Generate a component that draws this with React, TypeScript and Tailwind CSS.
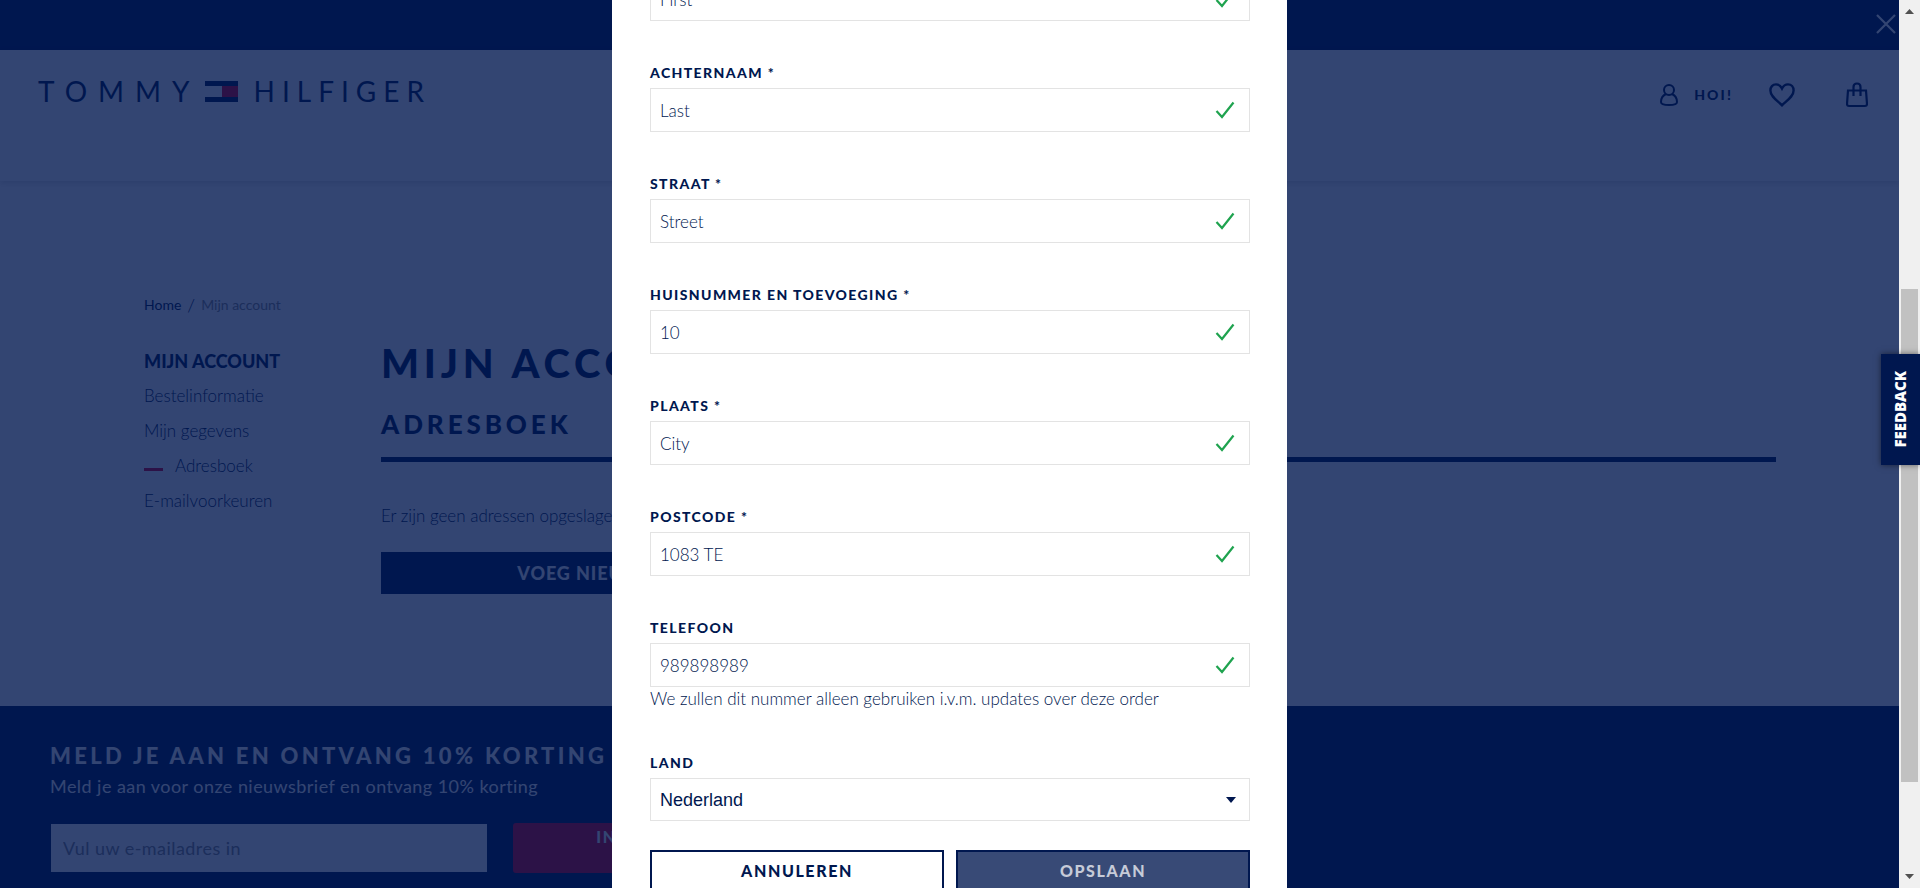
import React from "react";

type Field = { id: string; label: string; value: string; help?: string };

const fields: Field[] = [
  { id: "firstName", label: "Voornaam *", value: "First" },
  { id: "lastName", label: "Achternaam *", value: "Last" },
  { id: "street", label: "Straat *", value: "Street" },
  { id: "houseNumber", label: "Huisnummer en toevoeging *", value: "10" },
  { id: "city", label: "Plaats *", value: "City" },
  { id: "zip", label: "Postcode *", value: "1083 TE" },
  {
    id: "phone",
    label: "Telefoon",
    value: "989898989",
    help: "We zullen dit nummer alleen gebruiken i.v.m. updates over deze order",
  },
];

const menu = ["Bestelinformatie", "Mijn gegevens", "Adresboek", "E-mailvoorkeuren"];

function Logo() {
  return (
    <a href="#" aria-label="Tommy Hilfiger" className="flex items-center text-[28px] leading-8">
      <span className="tracking-[11px]">TOMMY</span>
      <svg width="33" height="21" viewBox="0 0 33 21" className="mr-4 ml-1">
        <rect width="33" height="21" fill="#fff" />
        <rect x="17" y="5" width="16" height="11" fill="#dc0028" />
        <rect width="33" height="5" fill="#00174f" />
        <rect y="16" width="33" height="5" fill="#00174f" />
      </svg>
      <span className="tracking-[7px]">HILFIGER</span>
    </a>
  );
}

function Header() {
  return (
    <header>
      <div className="flex h-[50px] items-center justify-end bg-[#00174f] pr-[3px] pb-0.5">
        <button aria-label="Sluiten" className="text-white">
          <svg width="20" height="20" viewBox="0 0 20 20" fill="none" stroke="currentColor" strokeWidth="2.200">
            <path d="M1 1l18 18M19 1L1 19" />
          </svg>
        </button>
      </div>
      <div className="flex h-[131px] items-start justify-between pt-[25px] pr-[31px] pl-[38px] shadow-[0_2px_6px_rgba(0,0,0,0.15)]">
        <Logo />
        <nav className="flex h-10 items-center">
          <a href="#" className="mr-9 flex items-center gap-4 text-sm font-black tracking-[0.15em]">
            <svg width="18" height="22" viewBox="0 0 18 22" fill="none" stroke="currentColor" strokeWidth="2">
              <circle cx="9" cy="6" r="5" />
              <path d="M6 10C2.800 11.500 1 14.500 1 18c0 2 3.500 3 8 3s8-1 8-3c0-3.500-1.800-6.500-5-8" />
            </svg>
            HOI!
          </a>
          <a href="#" aria-label="Verlanglijst" className="mr-[51px]">
            <svg width="26" height="24" viewBox="0 0 26 24" fill="none" stroke="currentColor" strokeWidth="2.400">
              <path d="M13 5.500C11.500 2.500 9.500 1.400 7 1.400 3.600 1.400 1.400 4 1.400 7.500 1.400 13.500 8 17.500 13 22.300c5-4.800 11.600-8.800 11.600-14.800 0-3.500-2.200-6.100-5.600-6.100-2.500 0-4.500 1.100-6 4.100z" />
            </svg>
          </a>
          <a href="#" aria-label="Winkeltas">
            <svg width="22" height="26" viewBox="0 0 22 26" fill="none" stroke="currentColor" strokeWidth="2.200">
              <path d="M2 8.500h18l1 13.500q0 2-2 2H3q-2 0-2-2z" />
              <path d="M7.500 14V5q0-3.500 3.500-3.500T14.500 5v9" />
            </svg>
          </a>
        </nav>
      </div>
    </header>
  );
}

function Account() {
  return (
    <main className="flex-1 pt-28 pr-[123px] pl-36">
      <nav aria-label="Kruimelpad" className="flex items-center gap-1.5 text-sm leading-6 font-light">
        <a href="#" className="font-normal">
          Home
        </a>
        <span className="text-lg leading-6">/</span>
        <span className="font-normal text-[#8b8b8b]">Mijn account</span>
      </nav>
      <div className="mt-[23px] flex">
        <aside className="w-[237px] shrink-0 pt-1">
          <h2 className="text-lg leading-[34px] font-black">MIJN ACCOUNT</h2>
          <ul className="text-[17px] leading-[35px] font-light">
            {menu.map((item) => (
              <li key={item} className="flex items-center">
                {item === "Adresboek" && <span className="mt-2 mr-3 h-[3px] w-[19px] bg-[#dc0028]" />}
                <a href="#">{item}</a>
              </li>
            ))}
          </ul>
        </aside>
        <section className="min-w-0 flex-1">
          <h1 className="text-[40px] leading-[46px] font-black tracking-[0.12em] whitespace-nowrap">MIJN ACCOUNT</h1>
          <h2 className="mt-[21px] border-b-5 border-[#00174f] pb-4 text-[26px] leading-[34px] font-black tracking-[0.15em]">
            ADRESBOEK
          </h2>
          <p className="mt-10 text-[17px] leading-7 font-light">Er zijn geen adressen opgeslagen</p>
          <button className="mt-[22px] h-[42px] w-[508px] bg-[#00174f] text-lg font-black tracking-wider text-white">
            VOEG NIEUW ADRES TOE
          </button>
        </section>
      </div>
    </main>
  );
}

function Footer() {
  return (
    <footer className="h-[182px] shrink-0 bg-[#00174f] px-[50px] pt-[35px] text-white">
      <h2 className="text-[22px] leading-[30px] font-black tracking-[0.15em]">MELD JE AAN EN ONTVANG 10% KORTING</h2>
      <p className="text-lg leading-[30px] tracking-wide">Meld je aan voor onze nieuwsbrief en ontvang 10% korting</p>
      <form className="mt-[22px] flex items-center gap-[26px]">
        <input
          type="email"
          aria-label="E-mailadres"
          placeholder="Vul uw e-mailadres in"
          className="ml-px h-12 w-[436px] bg-white px-3 text-lg tracking-wide placeholder:text-[#8b8b8b]"
        />
        <button
          type="button"
          className="flex h-[50px] w-72 justify-center rounded-[3px] bg-[#dc0028] pt-0.5 text-base font-black tracking-widest text-white"
        >
          INSCHRIJVEN
        </button>
      </form>
    </footer>
  );
}

const labelClass = "block text-sm leading-6 font-black tracking-widest uppercase";

function AddressDialog() {
  return (
    <div className="absolute inset-0 flex items-start justify-center bg-[#00174f]/80">
      <form role="dialog" aria-label="Adres" className="-mt-[50px] w-[675px] bg-white pr-[37px] pb-10 pl-[38px]">
        {fields.map((f) => (
          <div key={f.id} className="mb-10">
            <label htmlFor={f.id} className={labelClass}>
              {f.label}
            </label>
            <div className="relative mt-[3px] flex items-center">
              <input
                id={f.id}
                defaultValue={f.value}
                className="h-[44px] w-full border border-[#e3e3e3] bg-white pr-12 pl-[9px] text-[17px] font-light"
              />
              <svg width="20" height="18" viewBox="0 0 20 18" fill="none" stroke="#1fa34f" strokeWidth="2.200" className="absolute right-[15px]">
                <path d="M1.500 10l5.500 6L18.500 1.500" />
              </svg>
            </div>
            {f.help && <p className="text-[17px] leading-6 font-light">{f.help}</p>}
          </div>
        ))}
        <label htmlFor="country" className={labelClass}>
          Land
        </label>
        <div className="relative mt-[3px] flex items-center">
          <select
            id="country"
            className="h-[43px] w-full appearance-none border border-[#e3e3e3] bg-white px-[9px] font-['Liberation_Sans',sans-serif] text-lg"
          >
            <option>Nederland</option>
          </select>
          <svg width="10" height="6" viewBox="0 0 10 6" className="pointer-events-none absolute right-[14px]">
            <path d="M0 0h10L5 6z" fill="#00174f" />
          </svg>
        </div>
        <div className="mt-[29px] grid grid-cols-2 gap-3">
          <button type="button" className="h-[42px] border-2 border-[#00174f] text-base font-black tracking-widest">
            ANNULEREN
          </button>
          <button
            type="button"
            className="h-[42px] border-2 border-[#00174f] bg-[#384a76] text-base font-black tracking-widest text-[#c6cbd8]"
          >
            OPSLAAN
          </button>
        </div>
      </form>
    </div>
  );
}

function ScrollTrack() {
  return (
    <div className="flex w-[21px] shrink-0 flex-col items-center bg-[#f0f0f0] py-[9px]">
      <svg width="9" height="5" viewBox="0 0 9 5">
        <path d="M4.500 0L9 5H0z" fill="#505050" />
      </svg>
      <div className="flex w-full flex-1 flex-col px-0.5">
        <div className="grow-275" />
        <div className="grow-493 bg-[#c1c1c1]" />
        <div className="grow-92" />
      </div>
      <svg width="9" height="5" viewBox="0 0 9 5">
        <path d="M0 0h9L4.500 5z" fill="#505050" />
      </svg>
    </div>
  );
}

export default function App() {
  return (
    <div className="relative flex h-screen overflow-hidden font-[Lato,sans-serif] text-[#00174f]">
      <div className="relative flex min-w-0 flex-1 flex-col overflow-hidden bg-white">
        <Header />
        <Account />
        <Footer />
        <AddressDialog />
      </div>
      <ScrollTrack />
      <button className="absolute top-[354px] right-0 flex h-[111px] w-[39px] items-center justify-center bg-[#00174f] font-['Open_Sans',sans-serif] text-[15px] font-extrabold text-white shadow-[0_0_6px_rgba(0,0,0,0.5)]">
        <span className="rotate-180 [writing-mode:vertical-rl]">FEEDBACK</span>
      </button>
    </div>
  );
}
